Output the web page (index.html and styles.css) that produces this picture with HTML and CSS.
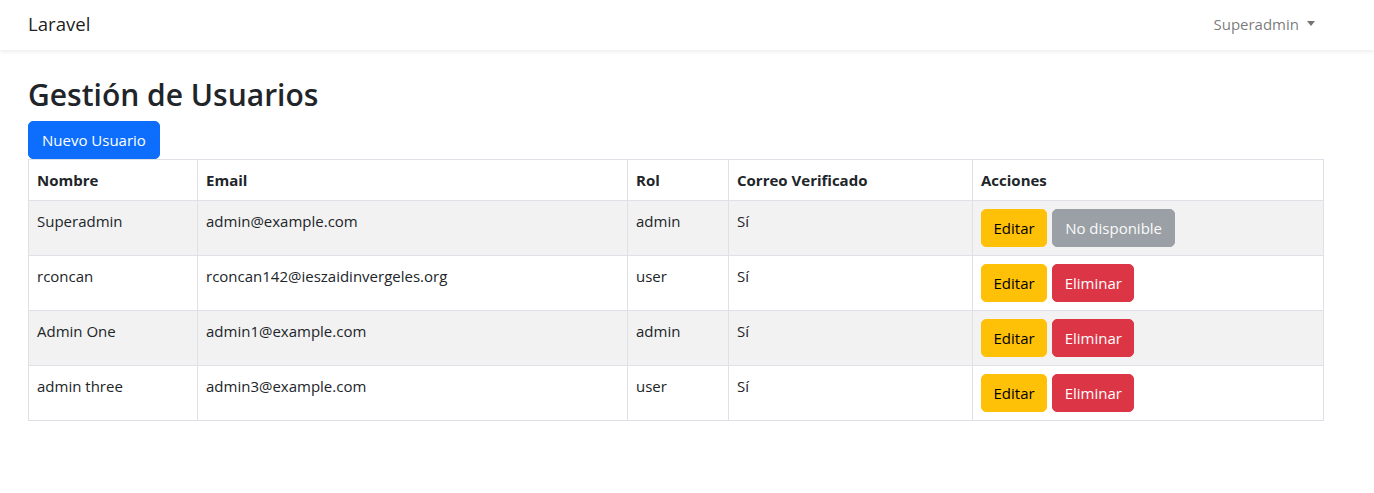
FILE: index.html
```html
<!DOCTYPE html>
<html lang="es">
<head>
<meta charset="utf-8">
<title>Laravel</title>
<link rel="stylesheet" href="styles.css">
</head>
<body>
<nav class="navbar">
  <div class="container nav-inner">
    <a class="brand" href="#">Laravel</a>
    <a class="nav-link" href="#">Superadmin<span class="caret"></span></a>
  </div>
</nav>
<main class="main">
  <div class="container">
    <h1 class="title">Gestión de Usuarios</h1>
    <div class="toolbar"><a class="btn btn-primary" href="#">Nuevo Usuario</a></div>
    <table class="table">
      <colgroup>
        <col class="c-name"><col class="c-email"><col class="c-rol"><col class="c-ver"><col class="c-act">
      </colgroup>
      <thead>
        <tr><th>Nombre</th><th>Email</th><th>Rol</th><th>Correo Verificado</th><th>Acciones</th></tr>
      </thead>
      <tbody>
        <tr class="odd">
          <td>Superadmin</td><td>admin@example.com</td><td>admin</td><td>Sí</td>
          <td><div class="actions"><a class="btn btn-warning" href="#">Editar</a><span class="btn btn-secondary disabled">No disponible</span></div></td>
        </tr>
        <tr>
          <td>rconcan</td><td>rconcan142@ieszaidinvergeles.org</td><td>user</td><td>Sí</td>
          <td><div class="actions"><a class="btn btn-warning" href="#">Editar</a><button class="btn btn-danger" type="button">Eliminar</button></div></td>
        </tr>
        <tr class="odd">
          <td>Admin One</td><td>admin1@example.com</td><td>admin</td><td>Sí</td>
          <td><div class="actions"><a class="btn btn-warning" href="#">Editar</a><button class="btn btn-danger" type="button">Eliminar</button></div></td>
        </tr>
        <tr>
          <td>admin three</td><td>admin3@example.com</td><td>user</td><td>Sí</td>
          <td><div class="actions"><a class="btn btn-warning" href="#">Editar</a><button class="btn btn-danger" type="button">Eliminar</button></div></td>
        </tr>
      </tbody>
    </table>
  </div>
</main>
</body>
</html>
```

FILE: styles.css
```css
* { box-sizing: border-box; }
html, body { margin: 0; padding: 0; }
body {
  font-family: "Open Sans", "Noto Sans", sans-serif;
  font-size: 15px;
  line-height: 24px;
  color: #212529;
  background: #fff;
}
a { text-decoration: none; }
.container {
  margin-left: 28px;
  width: 1295px;
}
.navbar {
  height: 50px;
  background: #fff;
  box-shadow: 0 2px 4px rgba(0, 0, 0, 0.075);
}
.nav-inner {
  height: 50px;
  display: flex;
  align-items: center;
  justify-content: space-between;
}
.brand {
  font-size: 18.6px;
  line-height: 28px;
  color: rgba(0, 0, 0, 0.9);
  margin-top: -2px;
}
.nav-link {
  color: rgba(0, 0, 0, 0.55);
  padding: 0 8px;
  display: flex;
  align-items: center;
  margin-top: -3px;
}
.caret {
  display: inline-block;
  margin-left: 8px;
  border-top: 5px solid rgba(0, 0, 0, 0.55);
  border-left: 4.5px solid transparent;
  border-right: 4.5px solid transparent;
  width: 0;
  height: 0;
}
.main { padding-top: 26px; }
.title {
  margin: 0 0 8px 0;
  font-size: 30px;
  line-height: 37px;
  font-weight: 600;
  color: #212529;
}
.toolbar { display: flex; }
.btn {
  display: inline-block;
  font-family: inherit;
  font-size: 15px;
  line-height: 24px;
  padding: 6px 12px;
  border: 1px solid transparent;
  border-radius: 5px;
  cursor: pointer;
  text-align: center;
}
.btn-primary { background: #0d6efd; border-color: #0d6efd; color: #fff; padding: 6px 13px; }
.btn-warning { background: #ffc107; border-color: #ffc107; color: #000; padding: 6px 11.5px; }
.btn-danger { background: #dc3545; border-color: #dc3545; color: #fff; padding: 6px 11.5px; }
.btn-secondary { background: #6c757d; border-color: #6c757d; color: #fff; }
.disabled { opacity: 0.65; cursor: default; }
.table {
  width: 1295px;
  border-collapse: collapse;
  border: 1px solid #dee2e6;
  table-layout: fixed;
  vertical-align: top;
}
.c-name { width: 169px; }
.c-email { width: 430px; }
.c-rol { width: 101px; }
.c-ver { width: 244px; }
.c-act { width: 351px; }
.table th, .table td {
  border: 1px solid #dee2e6;
  padding: 8px;
  text-align: left;
  vertical-align: top;
}
.table th { font-weight: 700; }
.table tr.odd td { background: #f2f2f2; }
.actions { display: flex; gap: 5px; }
```
